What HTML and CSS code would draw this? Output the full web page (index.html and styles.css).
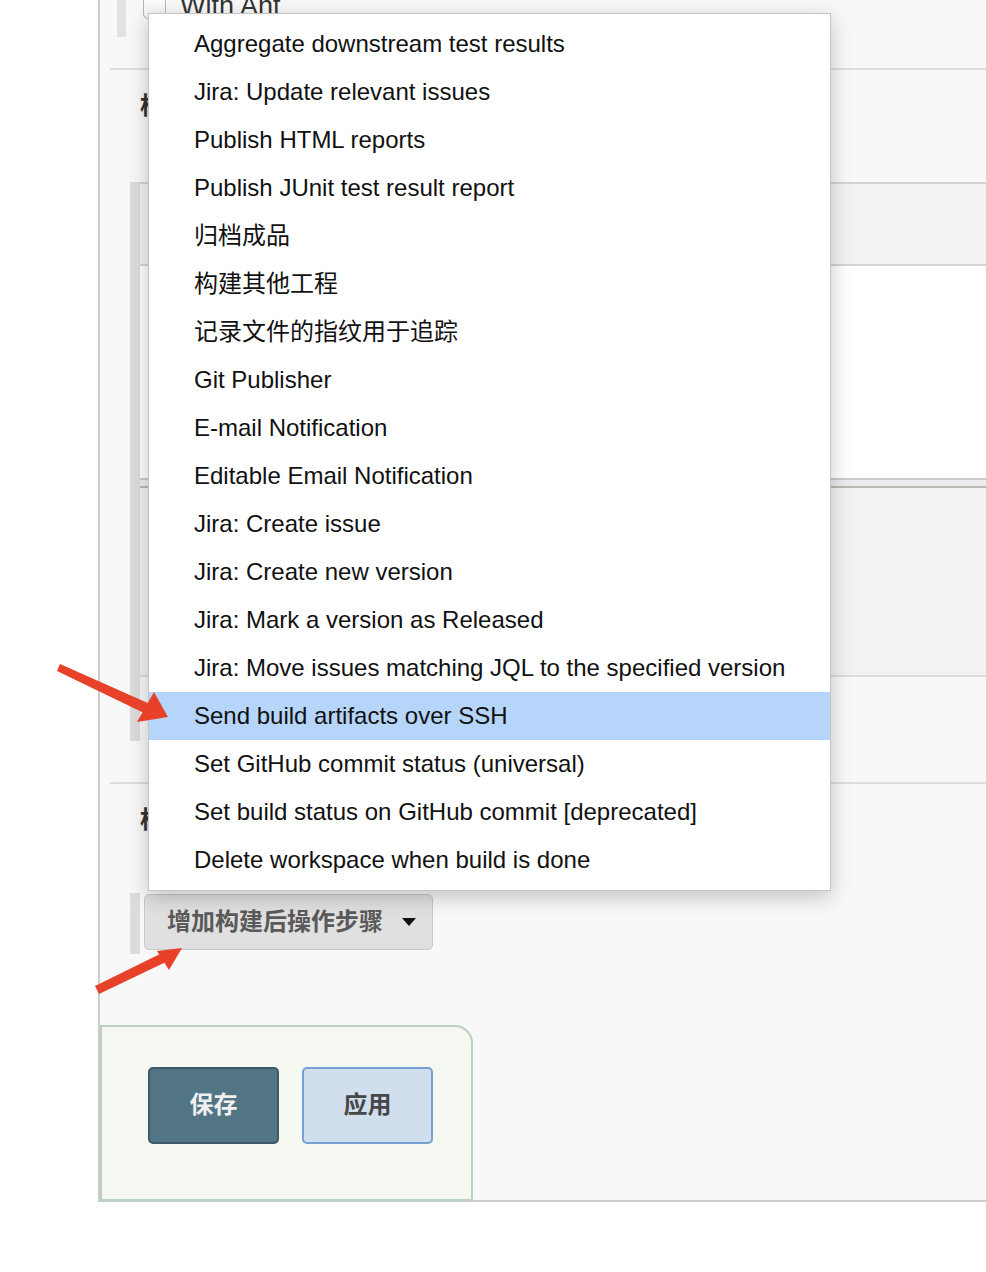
FILE: index.html
```html
<!DOCTYPE html>
<html lang="zh-CN">
<head>
  <meta charset="UTF-8">
  <meta name="viewport" content="width=device-width, initial-scale=1.0">
  <title>Job Config</title>
  <link rel="stylesheet" href="styles.css">
</head>
<body>

  <div class="page">
    <div class="panel">

      <div class="env">
        <div class="chunk-bar short"></div>
        <label class="check-row"><span class="checkbox"></span>With Ant</label>
      </div>

      <div class="section build">
        <h2 class="section-title">构建</h2>
        <div class="step">
          <div class="chunk-bar"></div>
          <div class="step-body">
            <div class="step-head"></div>
            <div class="step-main"></div>
            <div class="step-split"></div>
            <div class="step-adv"></div>
            <div class="step-foot"></div>
          </div>
        </div>
      </div>

      <div class="section post">
        <h2 class="section-title">构建后操作</h2>
        <div class="add-row">
          <div class="chunk-bar"></div>
          <button class="add-btn">增加构建后操作步骤<span class="caret"></span></button>
        </div>
      </div>

      <div class="bottom-bar">
        <button class="btn save">保存</button>
        <button class="btn apply">应用</button>
      </div>
    </div>

    <ul class="menu">
      <li>Aggregate downstream test results</li>
      <li>Jira: Update relevant issues</li>
      <li>Publish HTML reports</li>
      <li>Publish JUnit test result report</li>
      <li>归档成品</li>
      <li>构建其他工程</li>
      <li>记录文件的指纹用于追踪</li>
      <li>Git Publisher</li>
      <li>E-mail Notification</li>
      <li>Editable Email Notification</li>
      <li>Jira: Create issue</li>
      <li>Jira: Create new version</li>
      <li>Jira: Mark a version as Released</li>
      <li>Jira: Move issues matching JQL to the specified version</li>
      <li class="selected">Send build artifacts over SSH</li>
      <li>Set GitHub commit status (universal)</li>
      <li>Set build status on GitHub commit [deprecated]</li>
      <li>Delete workspace when build is done</li>
    </ul>

    <!-- annotation arrows -->
    <svg class="arrows" width="986" height="1272" viewBox="0 0 986 1272">
      <polygon points="60,664 150,704 146,714 57,671" fill="#e8412a"/>
      <polygon points="168,717 137,722 154,692" fill="#e8412a"/>
      <polygon points="95,986 164,952 168,961 99,994" fill="#e8412a"/>
      <polygon points="182,948 157,951 169,970" fill="#e8412a"/>
    </svg>
  </div>

</body>
</html>
```

FILE: styles.css
```css
body {
  margin: 0;
  background-color: #fff;
  font-family: "Liberation Sans", "Noto Sans CJK SC", sans-serif;
}

.page {
  position: relative;
  width: 986px;
  height: 1272px;
  overflow: hidden;
}

.panel {
  margin-left: 98px;
  height: 1200px;
  background-color: #f8f8f8;
  border-left: 2px solid #ccc;
  border-bottom: 2px solid #ccc;
}

.chunk-bar {
  width: 10px;
  background-color: #dcdcdc;
  flex-shrink: 0;
}

.chunk-bar.short {
  width: 9px;
  height: 37px;
  margin-left: 17px;
  background-color: #e2e2e2;
}

/* build environment, cut at the top */
.env {
  display: flex;
  align-items: flex-start;
  height: 68px;
}

.check-row {
  display: flex;
  align-items: center;
  gap: 14px;
  margin-left: 17px;
  margin-top: -7px;
  font-size: 27px;
  line-height: 26px;
  color: #333;
}

.checkbox {
  width: 21px;
  height: 21px;
  margin-top: 2px;
  border: 1px solid #b5b5b5;
  border-radius: 5px;
  background: linear-gradient(#fff, #f0f0f0);
}

.section {
  margin-left: 10px;
  border-top: 2px solid #ddd;
}

.section-title {
  margin: 0;
  padding: 24px 0 0 30px;
  height: 88px;
  font-size: 24px;
  line-height: 24px;
  font-weight: bold;
  color: #333;
}

.post .section-title {
  height: 85px;
}

.step {
  display: flex;
  margin-left: 20px;
  margin-bottom: 41px;
}

.step-body {
  flex: 1;
}

.step-head {
  height: 80px;
  background-color: #f2f2f2;
  border-top: 2px solid #d4d4d4;
  border-bottom: 2px solid #d4d4d4;
}

.step-main {
  height: 212px;
  background-color: #fff;
}

.step-split {
  height: 6px;
  background-color: #ececec;
  border-top: 2px solid #cacaca;
  border-bottom: 2px solid #b9b9b3;
}

.step-adv {
  height: 187px;
  background-color: #f2f2f2;
  border-bottom: 2px solid #dcdcdc;
}

.step-foot {
  height: 64px;
  background-color: #f8f8f8;
}

.add-row {
  display: flex;
  margin-left: 20px;
  height: 61px;
}

.add-btn {
  display: flex;
  align-items: center;
  width: 289px;
  height: 56px;
  margin: 1px 0 0 4px;
  padding: 0 0 5px 22px;
  background-color: #e0e0e0;
  border: 1px solid #c8c8c8;
  border-radius: 5px;
  font-family: inherit;
  font-size: 24px;
  font-weight: bold;
  color: #5a5a5a;
}

.caret {
  margin: 5px 0 0 19px;
  width: 0;
  height: 0;
  border-left: 7px solid transparent;
  border-right: 7px solid transparent;
  border-top: 8px solid #111;
}

.bottom-bar {
  box-sizing: border-box;
  display: flex;
  gap: 23px;
  width: 373px;
  height: 176px;
  margin-top: 71px;
  padding: 40px 0 0 46px;
  background-color: #f5f8f1;
  border: 2px solid #b9d1c2;
  border-top-right-radius: 18px;
}

.btn {
  width: 131px;
  height: 77px;
  padding-bottom: 8px;
  border-radius: 5px;
  font-family: inherit;
  font-size: 24px;
  font-weight: bold;
}

.save {
  background-color: #517584;
  border: 2px solid #3b5966;
  color: #f0f0f0;
}

.apply {
  background-color: #d1deee;
  border: 2px solid #74a0d2;
  color: #474747;
}

/* open select list */
.menu {
  position: absolute;
  left: 148px;
  top: 13px;
  box-sizing: border-box;
  width: 683px;
  height: 878px;
  margin: 0;
  padding: 6px 0;
  list-style: none;
  background-color: #fff;
  border: 1px solid #c4c4c4;
  box-shadow: 0 6px 20px rgba(0, 0, 0, 0.22);
}

.menu li {
  height: 48px;
  line-height: 48px;
  padding-left: 45px;
  font-size: 24px;
  color: #111;
  white-space: nowrap;
}

.menu li.selected {
  background-color: #b5d5fb;
}

.arrows {
  position: absolute;
  left: 0;
  top: 0;
  pointer-events: none;
}
```
